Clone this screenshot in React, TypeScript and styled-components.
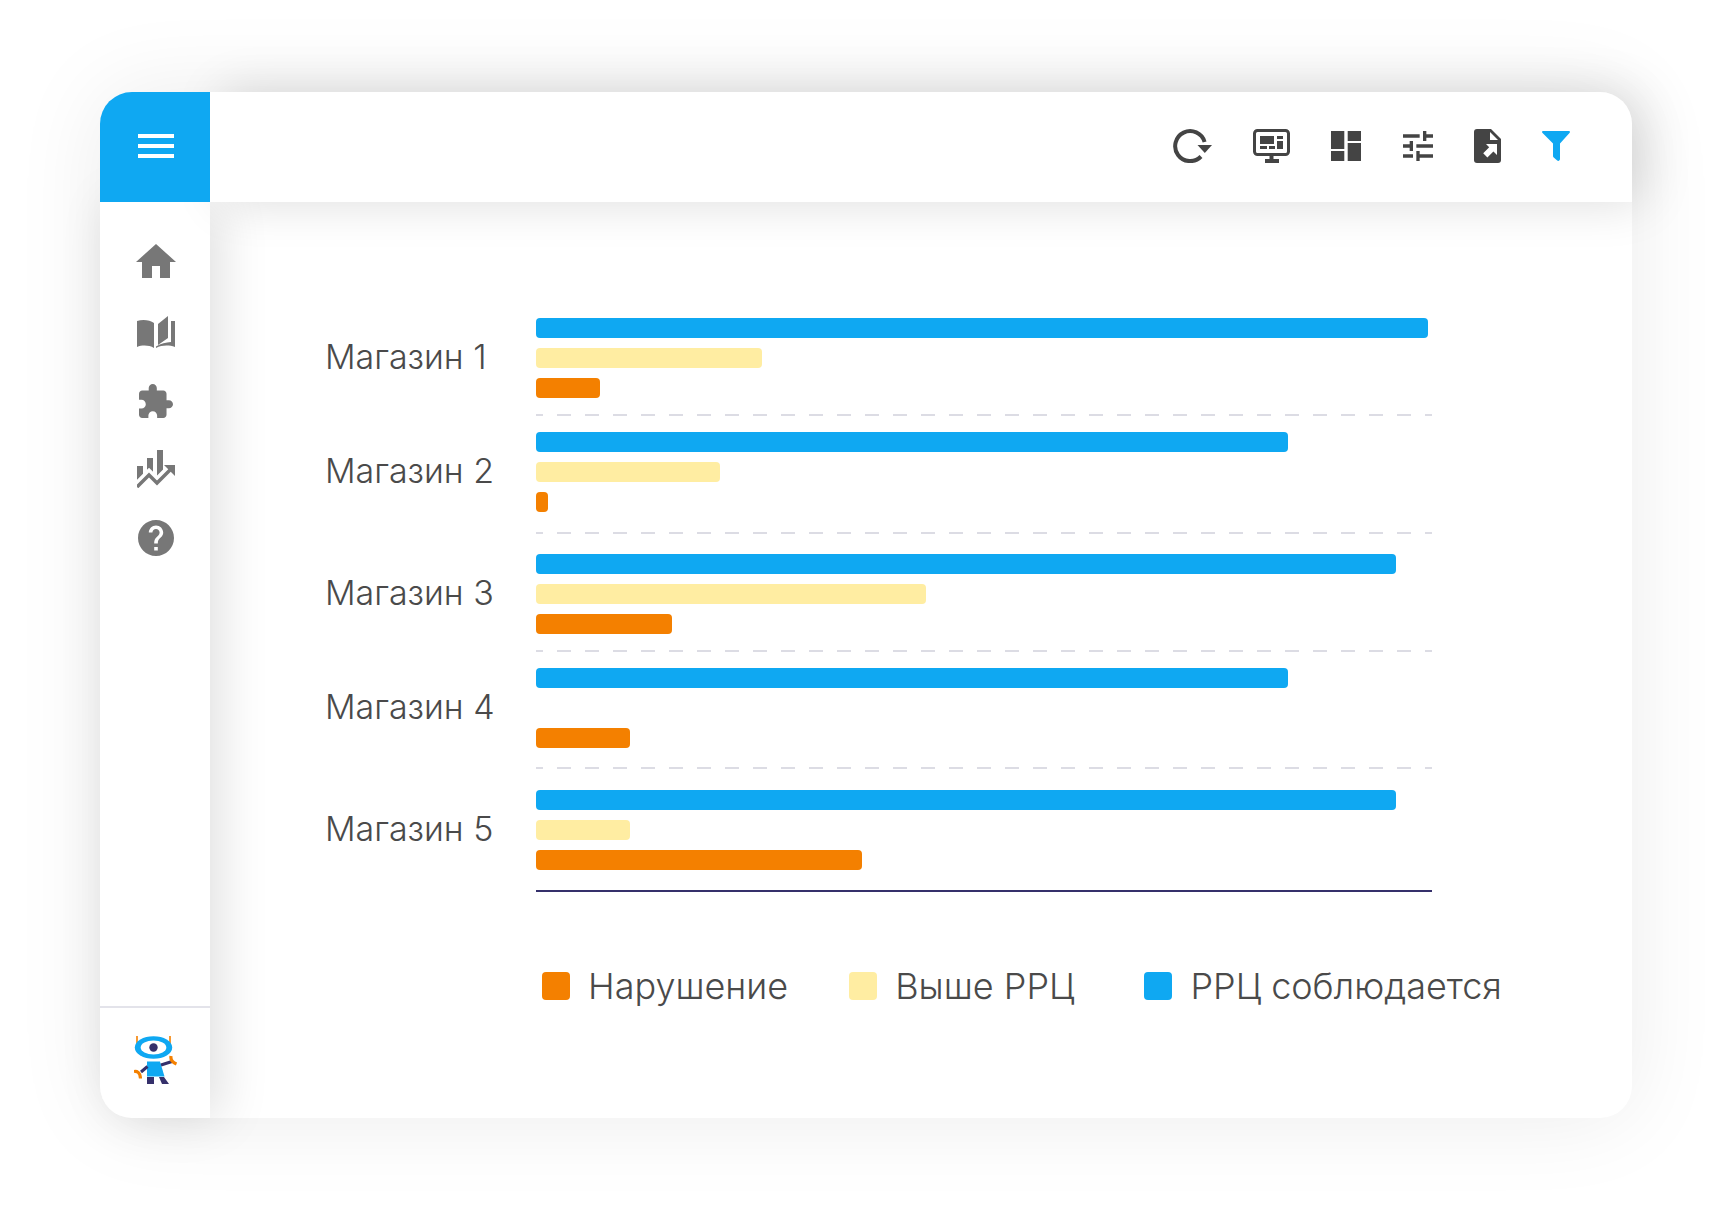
import { FC } from 'react';
import styled, { createGlobalStyle } from 'styled-components';

const BLUE = '#0fa8f2';
const YELLOW = '#ffeda2';
const ORANGE = '#f48000';

type IStore = {
  name: string;
  blue: number;
  yellow: number;
  orange: number;
  gapAfter: number;
  gapBefore: number;
};

const stores: IStore[] = [
  { name: 'Магазин 1', blue: 892, yellow: 226, orange: 64, gapAfter: 16, gapBefore: 16 },
  { name: 'Магазин 2', blue: 752, yellow: 184, orange: 12, gapAfter: 20, gapBefore: 20 },
  { name: 'Магазин 3', blue: 860, yellow: 390, orange: 136, gapAfter: 16, gapBefore: 16 },
  { name: 'Магазин 4', blue: 752, yellow: 0, orange: 94, gapAfter: 19, gapBefore: 21 },
  { name: 'Магазин 5', blue: 860, yellow: 94, orange: 326, gapAfter: 20, gapBefore: 0 },
];

const App = () => (
  <Page>
    <GlobalStyle />
    <Card>
      <Burger>
        <BurgerLine />
        <BurgerLine />
        <BurgerLine />
      </Burger>
      <Toolbar>
        <svg width="39" height="34" viewBox="0 0 39 34">
          <path d="M31.6 13A15 15 0 1 0 28 27.500" fill="none" stroke="#444" strokeWidth="4" />
          <path d="M24.500 16h14.500l-7.200 8z" fill="#444" />
        </svg>
        <svg width="37" height="34" viewBox="0 0 37 34" fill="#444">
          <rect x="1.500" y="1.500" width="34" height="24" rx="3" fill="none" stroke="#444" strokeWidth="3" />
          <path d="M7 7h14v8H7zM24 7h6v3h-6zM24 12h6v8h-6zM7 17h7v3H7zM16 17h6v3h-6zM16.500 27h4v3h-4zM12 30h14v4H12z" />
        </svg>
        <DashboardIcon width="30" height="30" viewBox="0 0 30 30" fill="#444">
          <path d="M0 0h13.300v18H0zM16.700 0H30v10H16.700zM0 20h13.300v10H0zM16.700 12H30v18H16.700z" />
        </DashboardIcon>
        <svg width="30" height="30" viewBox="3 3 18 18" fill="#444">
          <path d="M3 17v2h6v-2H3zM3 5v2h10V5H3zm10 16v-2h8v-2h-8v-2h-2v6h2zM7 9v2H3v2h4v2h2V9H7zm14 4v-2H11v2h10zm-6-4h2V7h4V5h-4V3h-2v6z" />
        </svg>
        <svg width="27" height="34" viewBox="0 0 27 34">
          <path d="M3 0h14l10 10v21a3 3 0 0 1-3 3H3a3 3 0 0 1-3-3V3a3 3 0 0 1 3-3z" fill="#444" />
          <path d="M16 3l8 8h-8zM12 15h11v11l-3.600-3.600-6 6-4.200-4.200 6-6z" fill="#fff" />
        </svg>
        <svg width="28" height="30" viewBox="0 0 28 30" fill={BLUE}>
          <path d="M1.200 0h25.600c1 0 1.500 1 .9 1.800L18 12.500V28c0 1.600-1.600 2.400-2.800 1.500l-3.200-2.700c-.7-.5-1-1.100-1-1.900V12.500L.3 1.800C-.3 1 .2 0 1.200 0z" />
        </svg>
      </Toolbar>
      <Sidebar>
        <SideMenu>
          <svg width="40" height="34" viewBox="0 0 40 34" fill="#777">
            <path d="M20 0l20 18h-6v16H24V22h-8v12H6V18H0z" />
          </svg>
          <BookIcon width="38" height="32" viewBox="0 0 38 32" fill="#777">
            <path d="M0 5c6-2 13-1 17 2v25c-5-3-12-3-17-1zM21 8L31 0v22l-10 7zM34 5h4v26c-6-2-13-2-19 1v-1.500c5-3 10-4 15-4.500z" />
          </BookIcon>
          <PuzzleIcon width="34" height="34" viewBox="2 1 21 21" fill="#777">
            <path d="M20.500 11H19V7c0-1.100-.9-2-2-2h-4V3.500C13 2.120 11.880 1 10.500 1S8 2.120 8 3.500V5H4c-1.100 0-1.990.9-1.990 2v3.800H3.500c1.490 0 2.700 1.210 2.700 2.700s-1.210 2.700-2.700 2.700H2V20c0 1.100.9 2 2 2h3.800v-1.500c0-1.490 1.210-2.700 2.700-2.700 1.490 0 2.700 1.210 2.700 2.700V22H17c1.100 0 2-.9 2-2v-4h1.500c1.380 0 2.500-1.120 2.500-2.500S21.880 11 20.500 11z" />
          </PuzzleIcon>
          <ChartIcon width="38" height="38" viewBox="0 0 38 38" fill="#777">
            <path d="M0 16h6v14H0zM10 8h6v20H10zM20 0h6v30h-6z" />
            <path d="M-2 38l14-14 8 8 14-14" fill="none" stroke="#fff" strokeWidth="9" />
            <path d="M0 37l12-12 8 8 14-14" fill="none" stroke="#777" strokeWidth="3.500" />
            <path d="M38 15v11l-11-11z" />
          </ChartIcon>
          <HelpIcon width="36" height="36" viewBox="2 2 20 20" fill="#777">
            <path d="M12 2C6.480 2 2 6.480 2 12s4.480 10 10 10 10-4.480 10-10S17.520 2 12 2zm1 17h-2v-2h2v2zm2.070-7.750l-.9.920C13.450 12.900 13 13.500 13 15h-2v-.5c0-1.100.45-2.100 1.170-2.830l1.240-1.260c.37-.36.59-.86.59-1.410 0-1.100-.9-2-2-2s-2 .9-2 2H8c0-2.210 1.790-4 4-4s4 1.790 4 4c0 .88-.36 1.680-.93 2.250z" />
          </HelpIcon>
        </SideMenu>
        <SideFooter>
          <svg width="44" height="48" viewBox="0 0 44 48">
            <path d="M3 0v8M36 0v8" stroke={ORANGE} strokeWidth="1.600" />
            <ellipse cx="19.500" cy="11.500" rx="18.700" ry="11.300" fill={BLUE} />
            <ellipse cx="19.500" cy="11.500" rx="12.800" ry="7" fill="#fff" />
            <circle cx="19.500" cy="11.500" r="4.200" fill="#35306b" />
            <path d="M13 25.500h13l4.500 15H13z" fill={BLUE} />
            <path d="M13 41h7v7h-7zM25 41h5l5 7h-7z" fill="#35306b" />
            <path d="M27 29l11-3.500M13.500 30.500L7 36" stroke="#35306b" strokeWidth="3" fill="none" />
            <path d="M37 20c-.5 3 .5 6 5.500 8M0 35.500c3-.5 6 .5 6.500 7" stroke={ORANGE} strokeWidth="3.200" fill="none" />
          </svg>
        </SideFooter>
      </Sidebar>
      <Content>
        <Chart>
          {stores.map((store, i) => (
            <StoreRow key={store.name} store={store} last={i === stores.length - 1} />
          ))}
        </Chart>
        <Legend>
          <LegendItem>
            <Swatch $color={ORANGE} />
            Нарушение
          </LegendItem>
          <LegendItem>
            <Swatch $color={YELLOW} />
            Выше РРЦ
          </LegendItem>
          <LegendItem $shift={9}>
            <Swatch $color={BLUE} />
            РРЦ соблюдается
          </LegendItem>
        </Legend>
      </Content>
    </Card>
  </Page>
);

export default App;

const StoreRow: FC<{ store: IStore; last: boolean }> = ({ store, last }) => (
  <>
    <Row>
      <StoreName>{store.name}</StoreName>
      <Bars>
        <Bar $color={BLUE} $width={store.blue} />
        <Bar $color={YELLOW} $width={store.yellow} />
        <Bar $color={ORANGE} $width={store.orange} />
      </Bars>
    </Row>
    {last ? (
      <Axis $after={store.gapAfter} />
    ) : (
      <Divider $after={store.gapAfter} $before={store.gapBefore} />
    )}
  </>
);

/* Styles */

const GlobalStyle = createGlobalStyle`
  html, body {
    margin: 0;
    background: #fff;
  }
`;

const Page = styled.div`
  box-sizing: border-box;
  width: 1732px;
  height: 1226px;
  padding: 92px 100px 108px;
  font-family: Inter, 'Noto Sans', sans-serif;
  font-weight: 300;
  color: #4a4a4a;
  overflow: hidden;
`;

const Card = styled.div`
  display: grid;
  grid-template-columns: 110px 1fr;
  grid-template-rows: 110px 1fr;
  height: 100%;
  background: #fff;
  border-radius: 32px;
  box-shadow: 0 0 90px rgba(0, 0, 0, 0.08);
`;

const Burger = styled.div`
  display: flex;
  flex-direction: column;
  align-items: center;
  justify-content: center;
  gap: 6px;
  padding: 0 0 2px 2px;
  background: ${BLUE};
  border-top-left-radius: 32px;
  position: relative;
  z-index: 4;
`;

const BurgerLine = styled.div`
  width: 36px;
  height: 4px;
  background: #fff;
`;

const Toolbar = styled.div`
  display: flex;
  align-items: center;
  justify-content: flex-end;
  gap: 41px;
  padding: 0 62px 2px 0;
  background: #fff;
  border-top-right-radius: 32px;
  position: relative;
  z-index: 3;
  box-shadow: 12px 0 50px rgba(0, 0, 0, 0.14);
`;

const DashboardIcon = styled.svg`
  margin-right: 1px;
`;

const Sidebar = styled.div`
  display: flex;
  flex-direction: column;
  background: #fff;
  border-bottom-left-radius: 32px;
  position: relative;
  z-index: 2;
  box-shadow: 10px 0 50px rgba(0, 0, 0, 0.13);
`;

const SideMenu = styled.div`
  flex: 1;
  display: flex;
  flex-direction: column;
  align-items: center;
  padding: 42px 0 0 1px;
`;

const BookIcon = styled.svg`
  margin-top: 38px;
`;

const PuzzleIcon = styled.svg`
  margin-top: 36px;
`;

const ChartIcon = styled.svg`
  margin-top: 32px;
`;

const HelpIcon = styled.svg`
  margin-top: 32px;
`;

const SideFooter = styled.div`
  display: flex;
  justify-content: center;
  height: 112px;
  box-sizing: border-box;
  padding: 28px 0 0 2px;
  border-top: 2px solid #e3e3ea;
`;

const Content = styled.div`
  padding: 116px 0 0 115px;
  min-width: 0;
`;

const Chart = styled.div`
  display: flex;
  flex-direction: column;
`;

const Row = styled.div`
  display: flex;
  align-items: center;
`;

const StoreName = styled.div`
  width: 211px;
  padding-bottom: 3px;
  font-size: 34px;
  line-height: 40px;
`;

const Bars = styled.div`
  display: flex;
  flex-direction: column;
  gap: 10px;
  width: 896px;
`;

const Bar = styled.div<{ $color: string; $width: number }>`
  width: ${(p) => p.$width}px;
  height: 20px;
  border-radius: 4px;
  background: ${(p) => p.$color};
`;

const Divider = styled.div<{ $after: number; $before: number }>`
  width: 896px;
  height: 2px;
  margin: ${(p) => p.$after}px 0 ${(p) => p.$before}px 211px;
  background: repeating-linear-gradient(
    to right,
    #dcdce4 0 7px,
    transparent 7px 21px,
    #dcdce4 21px 28px
  );
`;

const Axis = styled.div<{ $after: number }>`
  width: 896px;
  height: 2px;
  margin: ${(p) => p.$after}px 0 0 211px;
  background: #35306b;
`;

const Legend = styled.div`
  display: flex;
  align-items: center;
  gap: 61px;
  margin: 72px 0 0 217px;
  font-size: 36px;
  line-height: 44px;
  white-space: nowrap;
`;

const LegendItem = styled.div<{ $shift?: number }>`
  display: flex;
  align-items: center;
  gap: 18px;
  margin-left: ${(p) => p.$shift ?? 0}px;
`;

const Swatch = styled.span<{ $color: string }>`
  width: 28px;
  height: 28px;
  border-radius: 4px;
  background: ${(p) => p.$color};
`;
